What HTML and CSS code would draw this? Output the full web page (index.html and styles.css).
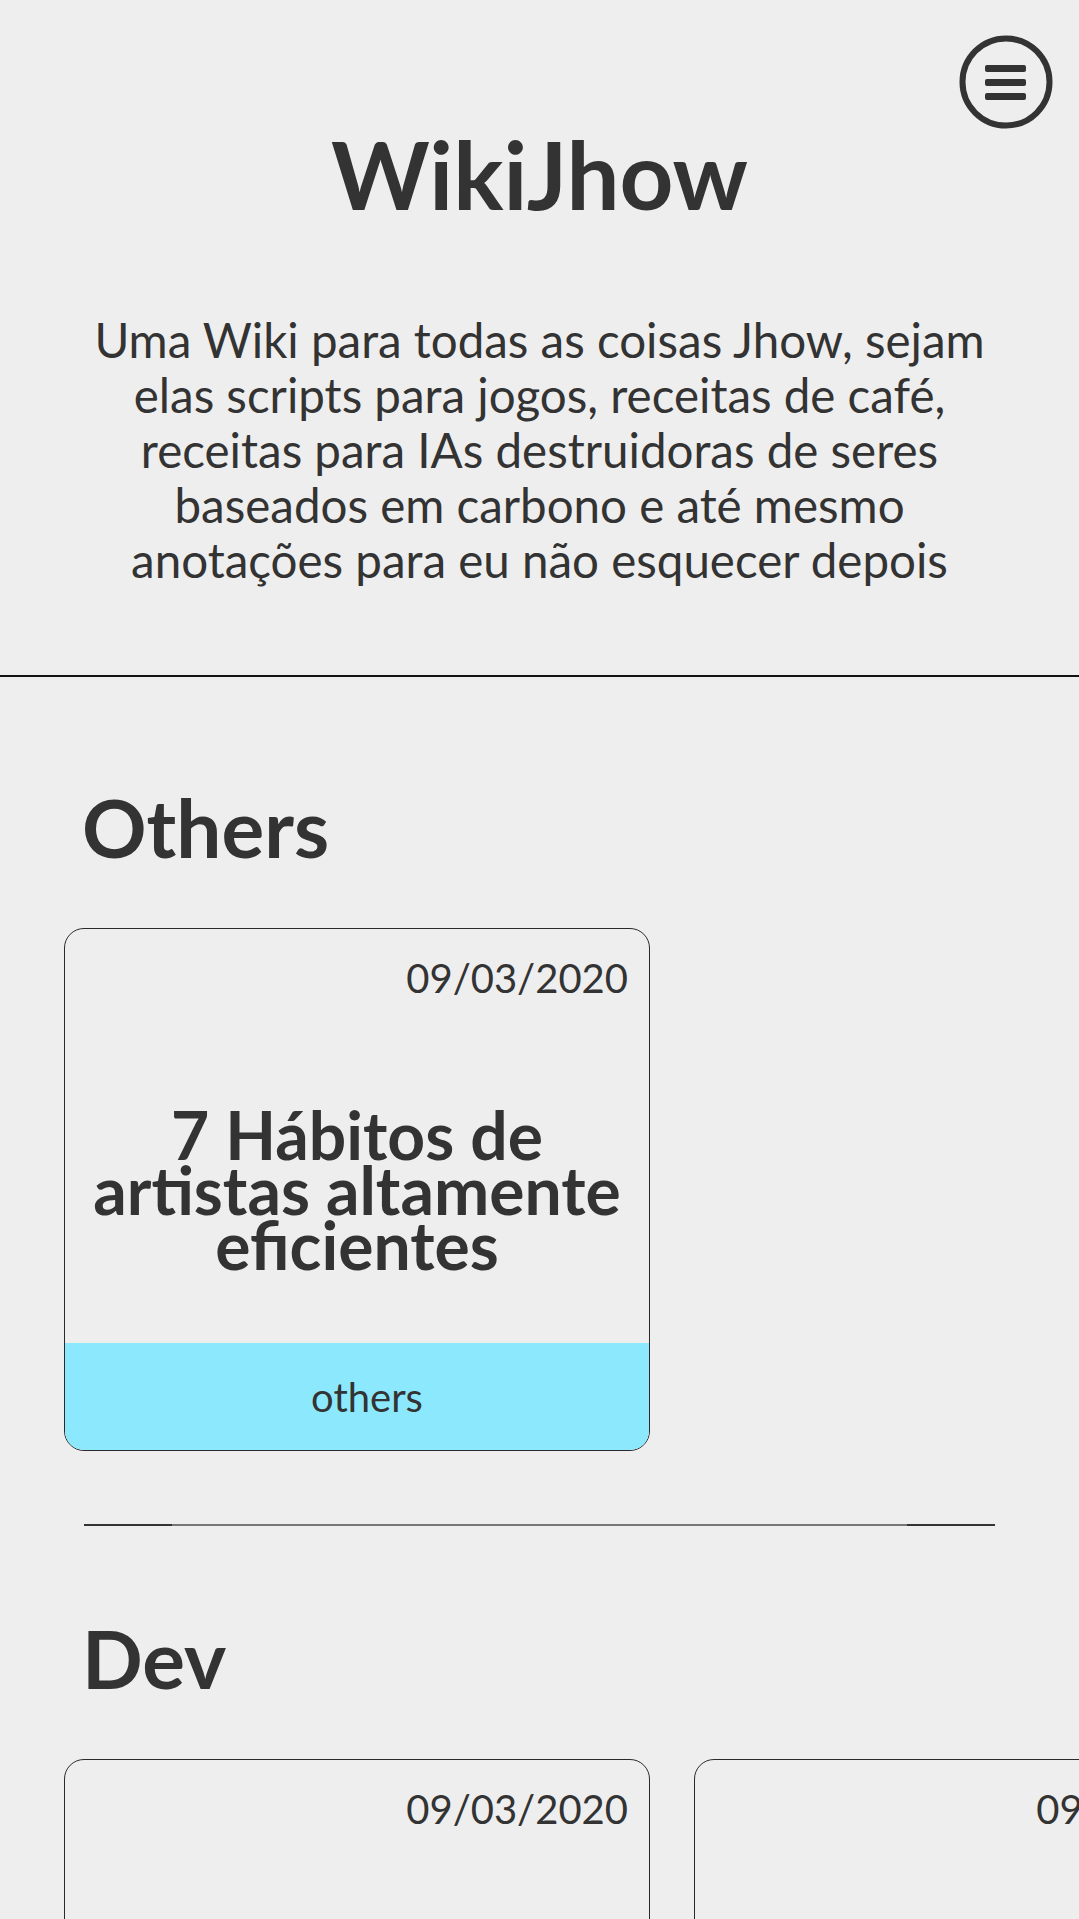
FILE: index.html
```html
<!DOCTYPE html>
<html lang="pt-BR">
<head>
<meta charset="utf-8">
<title>WikiJhow</title>
<link rel="stylesheet" href="styles.css">
</head>
<body>
<header class="top">
  <button class="menu-btn" aria-label="Menu">
    <svg width="96" height="96" viewBox="0 0 96 96">
      <circle cx="48" cy="48" r="43.5" fill="none" stroke="#333" stroke-width="6"/>
      <rect x="27" y="31" width="41" height="7" rx="2" fill="#333"/>
      <rect x="27" y="45" width="41" height="7" rx="2" fill="#333"/>
      <rect x="27" y="59" width="41" height="7" rx="2" fill="#333"/>
    </svg>
  </button>
  <h1 class="site-title">WikiJhow</h1>
  <p class="site-desc">Uma Wiki para todas as coisas Jhow, sejam elas scripts para jogos, receitas de café, receitas para IAs destruidoras de seres baseados em carbono e até mesmo anotações para eu não esquecer depois</p>
</header>
<hr class="top-rule">
<main class="content">
  <section class="category">
    <h2 class="cat-title">Others</h2>
    <div class="card-row">
      <article class="card">
        <div class="card-date">09/03/2020</div>
        <div class="card-body"><h3 class="card-title">7 Hábitos de artistas altamente eficientes</h3></div>
        <div class="card-tag">others</div>
      </article>
    </div>
  </section>
  <div class="divider"></div>
  <section class="category category-dev">
    <h2 class="cat-title">Dev</h2>
    <div class="card-row">
      <article class="card">
        <div class="card-date">09/03/2020</div>
        <div class="card-body"><h3 class="card-title">Scripts úteis para jogos</h3></div>
        <div class="card-tag">dev</div>
      </article>
      <article class="card">
        <div class="card-date">09/03/2020</div>
        <div class="card-body"><h3 class="card-title">Anotações de Git</h3></div>
        <div class="card-tag">dev</div>
      </article>
    </div>
  </section>
</main>
</body>
</html>
```
FILE: styles.css
```css
html, body {
  margin: 0;
  padding: 0;
}
body {
  background: #eeeeee;
  color: #333333;
  font-family: "Lato", "Noto Sans", sans-serif;
  overflow-x: hidden;
}
.top {
  position: relative;
  padding: 127px 40px 88px;
  text-align: center;
}
.menu-btn {
  position: absolute;
  top: 34px;
  right: 25px;
  width: 96px;
  height: 96px;
  padding: 0;
  border: 0;
  background: transparent;
  display: block;
}
.menu-btn svg { display: block; }
.site-title {
  margin: 0;
  font-size: 94px;
  line-height: 1;
  font-weight: 700;
}
.site-desc {
  margin: 91px auto 0;
  max-width: 905px;
  font-size: 47.5px;
  line-height: 55px;
}
.top-rule {
  margin: 0;
  border: 0;
  border-top: 2px solid #111;
  height: 0;
}
.content {
  padding: 0 0 40px;
}
.category {
  padding-top: 110px;
}
.category-dev {
  padding-top: 92px;
}
.cat-title {
  margin: 0 0 61px 82px;
  font-size: 80px;
  line-height: 1;
  font-weight: 700;
}
.card-row {
  display: flex;
  gap: 44px;
  padding-left: 64px;
}
.card {
  flex: 0 0 586px;
  height: 523px;
  box-sizing: border-box;
  border: 1.5px solid #2a2a2a;
  border-radius: 20px;
  overflow: hidden;
  display: flex;
  flex-direction: column;
}
.card-date {
  padding: 24px 21px 0 0;
  text-align: right;
  font-size: 40px;
  line-height: 50px;
}
.card-body {
  flex: 1;
  display: flex;
  align-items: center;
  justify-content: center;
  padding: 32px 14px 0;
}
.card-title {
  margin: 0;
  text-align: center;
  font-size: 66px;
  line-height: 55px;
  font-weight: 700;
}
.card-tag {
  height: 107px;
  background: #8ce9fd;
  display: flex;
  align-items: center;
  justify-content: center;
  padding-left: 20px;
  font-size: 40px;
}
.divider {
  margin: 73px 84px 0 84px;
  height: 2px;
  background: linear-gradient(to right, #333 0 88px, #777 88px calc(100% - 88px), #333 calc(100% - 88px));
}
```
